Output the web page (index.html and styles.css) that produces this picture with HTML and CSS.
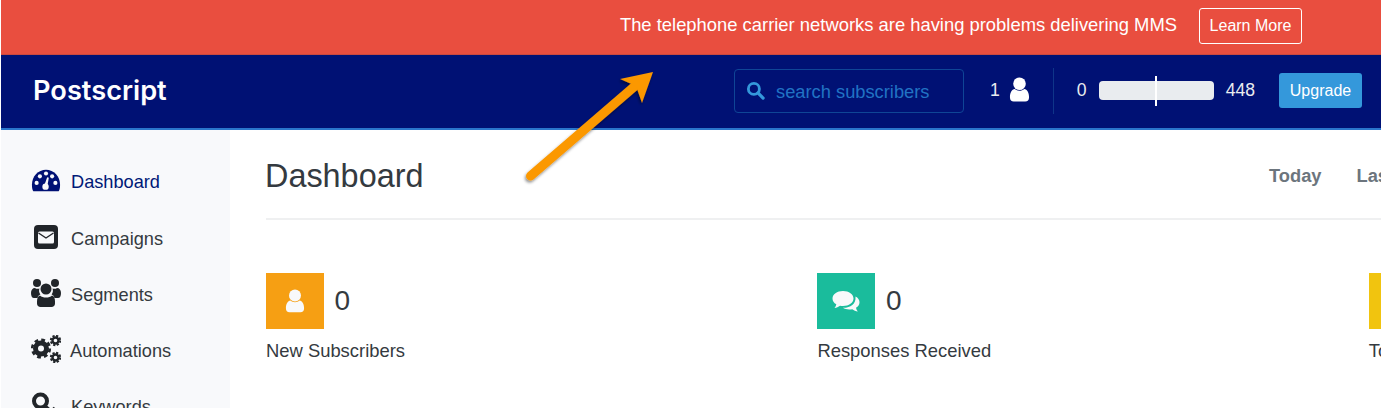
FILE: index.html
```html
<!DOCTYPE html>
<html lang="en">
<head>
<meta charset="utf-8">
<title>Postscript Dashboard</title>
<link rel="stylesheet" href="styles.css">
</head>
<body>
<div class="app">
  <div class="banner">
    <span class="banner-text">The telephone carrier networks are having problems delivering MMS</span>
    <a class="banner-btn">Learn More</a>
  </div>
  <header class="topbar">
    <div class="logo">Postscript</div>
    <div class="search">
      <svg class="search-icon" viewBox="0 0 20 20"><circle cx="8.3" cy="8.3" r="5.8" fill="none" stroke="currentColor" stroke-width="3"/><path d="M12.6 12.6 18 18" stroke="currentColor" stroke-width="3.4" stroke-linecap="round"/></svg>
      <span class="search-text">search subscribers</span>
    </div>
    <div class="count">
      <span>1</span>
      <svg class="count-icon" viewBox="0 0 22 26"><circle cx="11" cy="7" r="6.6" fill="currentColor"/><path d="M1 21c0-5 2-8 5-8.600 1.500 1.300 3 1.900 5 1.900s3.500-.6 5-1.900c3 .6 5 3.600 5 8.600 0 3-1.500 4.500-4 4.500H5c-2.500 0-4-1.500-4-4.500z" fill="currentColor"/></svg>
    </div>
    <div class="usage">
      <span>0</span>
      <div class="bar"><i class="tick"></i></div>
      <span>448</span>
    </div>
    <a class="upgrade">Upgrade</a>
  </header>
  <div class="body">
    <nav class="sidebar">
      <a class="nav-item active">
        <svg class="nav-icon level" viewBox="-1 0 32 26"><path fill="#001174" d="M1.500 24C.5 22.500 0 20.500 0 17 0 8 6.700 1 15 1s15 7 15 16c0 3.500-.5 5.500-1.500 7z"/><g fill="#f8f9fb"><circle cx="5" cy="15" r="2.200"/><circle cx="8.500" cy="8" r="2.200"/><circle cx="15" cy="5" r="2.200"/><circle cx="25" cy="15" r="2.200"/><circle cx="21.500" cy="8" r="2.200"/><circle cx="14.500" cy="19" r="3.400"/><path d="M13 18 16.300 9 18 9.500 16.300 19z"/></g></svg>
        <span>Dashboard</span>
      </a>
      <a class="nav-item">
        <svg class="nav-icon" viewBox="0 0 30 28"><rect x="3" y="2" width="24" height="24" rx="4" fill="#212529"/><rect x="7" y="8.500" width="16" height="12" rx="1.500" fill="#f8f9fb"/><path d="M7.500 10 15 15 22.500 10" fill="none" stroke="#212529" stroke-width="1.400"/></svg>
        <span>Campaigns</span>
      </a>
      <a class="nav-item">
        <svg class="nav-icon" viewBox="0 0 30 28"><g fill="#212529"><circle cx="6" cy="4" r="4"/><circle cx="24" cy="4" r="4"/><circle cx="15" cy="10" r="5.500"/><path d="M0 14c0-3 1.500-5 4-5 1 1 3 1 4.500.6-.8 1.800-.5 4.300.9 5.900-1.500.7-2.400 1.700-3 3.500H3c-2 0-3-2-3-5zM30 14c0-3-1.500-5-4-5-1 1-3 1-4.500.6.800 1.800.5 4.300-.9 5.900 1.500.7 2.400 1.700 3 3.500H27c2 0 3-2 3-5zM9 16.500c1.500 1.500 3.500 2 6 2s4.500-.5 6-2c2 .5 3 3 3 6v2c0 2-1.500 3.500-3.500 3.500h-11C7.500 28 6 26.500 6 24.500v-2c0-3 1-5.500 3-6z"/></g></svg>
        <span>Segments</span>
      </a>
      <a class="nav-item">
        <svg class="nav-icon" viewBox="0 0 30 28"><g fill="none" stroke="#212529"><circle cx="10" cy="13.500" r="5.500" stroke-width="5"/><circle cx="10" cy="13.500" r="8.800" stroke-width="2.600" stroke-dasharray="3.800 3.110"/><circle cx="24.500" cy="5.500" r="3" stroke-width="2.400"/><circle cx="24.500" cy="5.500" r="4.700" stroke-width="2" stroke-dasharray="2.200 1.490"/><circle cx="24.500" cy="22.500" r="3" stroke-width="2.400"/><circle cx="24.500" cy="22.500" r="4.700" stroke-width="2" stroke-dasharray="2.200 1.490"/></g></svg>
        <span class="tight">Automations</span>
      </a>
      <a class="nav-item">
        <svg class="nav-icon" viewBox="0 0 30 28"><circle cx="9.500" cy="10" r="6.500" fill="none" stroke="#212529" stroke-width="4"/><path d="M14 15 26 26M20 21l4-4" fill="none" stroke="#212529" stroke-width="3.600"/></svg>
        <span>Keywords</span>
      </a>
    </nav>
    <main class="main">
      <div class="page-head">
        <h1 class="title">Dashboard</h1>
        <div class="ranges"><span>Today</span><span>Last 7 Days</span></div>
      </div>
      <div class="stats">
        <section class="stat">
          <div class="stat-row">
            <div class="stat-icon orange"><svg class="stat-svg" viewBox="0 0 22 26"><circle cx="11" cy="7" r="6.600" fill="currentColor"/><path d="M1 21c0-5 2-8 5-8.600 1.500 1.300 3 1.900 5 1.900s3.500-.6 5-1.900c3 .6 5 3.600 5 8.600 0 3-1.500 4.500-4 4.500H5c-2.500 0-4-1.500-4-4.500z" fill="currentColor"/></svg></div>
            <span class="stat-num">0</span>
          </div>
          <div class="stat-label">New Subscribers</div>
        </section>
        <section class="stat">
          <div class="stat-row">
            <div class="stat-icon green"><svg class="stat-svg wide" viewBox="0 0 28 22"><path fill="currentColor" d="M11 1c6 0 10.500 3.300 10.500 7.500S17 16 11 16c-1 0-2-.1-3-.3-1.500 1.200-3.500 2-5.500 2.300 1-1.200 1.600-2.400 1.800-3.700C1.800 13 .5 10.900.5 8.500.5 4.300 5 1 11 1z"/><path fill="currentColor" d="M23.500 6.500c2.500 1.300 4 3.300 4 5.700 0 2.300-1.300 4.300-3.500 5.600.2 1.300.8 2.500 1.800 3.700-2-.3-4-1.100-5.500-2.300-1 .2-2 .3-3 .3-2.500 0-4.700-.6-6.500-1.700 7 .3 13.500-3.500 12.700-11.300z"/></svg></div>
            <span class="stat-num">0</span>
          </div>
          <div class="stat-label">Responses Received</div>
        </section>
        <section class="stat">
          <div class="stat-row">
            <div class="stat-icon yellow"></div>
            <span class="stat-num">0</span>
          </div>
          <div class="stat-label">Total Messages</div>
        </section>
      </div>
    </main>
  </div>
  <svg class="arrow" viewBox="0 0 140 125">
    <defs><filter id="sh" x="-20%" y="-20%" width="140%" height="140%"><feDropShadow dx="-1" dy="2" stdDeviation="1.500" flood-color="#000" flood-opacity=".45"/></filter></defs>
    <g filter="url(#sh)" fill="#fb9804">
      <path d="M10.500 111 115 21" stroke="#fb9804" stroke-width="9" stroke-linecap="round"/>
      <path d="M133 7 100 14 116 21 122 38z"/>
    </g>
  </svg>
</div>
</body>
</html>
```
FILE: styles.css
```css
* { box-sizing: border-box; }
html, body { margin: 0; height: 408px; overflow: hidden; background: #fff; }
body { font-family: "Liberation Sans", Arial, sans-serif; color: #212529; }
.app { position: relative; height: 408px; overflow: hidden; padding-left: 1px; }

.banner { height: 55px; background: #e94e3f; color: #fff; display: flex; align-items: center; justify-content: flex-end; padding: 0 79px 4px 0; gap: 22px; border-bottom: 1px solid #c9493f; }
.banner-text { font-size: 18.4px; white-space: nowrap; }
.banner-btn { width: 103px; height: 36px; margin-top: 1px; border: 1px solid #fff; border-radius: 3px; display: flex; align-items: center; justify-content: center; font-size: 16px; }

.topbar { height: 75px; background: #001174; border-bottom: 2px solid #2a76cc; display: flex; align-items: center; color: #e9ecef; font-size: 17.6px; padding: 0 19px 2px 32px; }
.logo { font-family: Inter, "Open Sans", sans-serif; font-weight: 600; font-size: 27.2px; color: #fff; margin-right: auto; }
.search { width: 230px; height: 44px; border: 1px solid #0f4596; border-radius: 4px; display: flex; align-items: center; gap: 11px; padding-left: 11px; color: #2173c4; font-size: 18.3px; }
.search-icon { width: 19px; height: 19px; color: #3498db; }
.search-text { padding-top: 2px; }
.count { display: flex; align-items: center; gap: 9px; margin-left: 26px; padding-right: 23px; height: 46px; border-right: 1px solid #0f3589; color: #e9ecef; }
.count-icon { width: 21px; height: 25px; color: #fff; margin-top: -3px; }
.usage { display: flex; align-items: center; gap: 12px; margin-left: 23px; }
.bar { position: relative; width: 115px; height: 19px; background: #e9ecef; border-radius: 4px; }
.tick { position: absolute; left: 56px; top: -5px; width: 2px; height: 30px; background: #fff; }
.upgrade { width: 83px; height: 35px; margin-left: 24px; background: #3498db; color: #fff; border-radius: 3px; font-size: 16px; display: flex; align-items: center; justify-content: center; }

.body { display: flex; height: 279px; overflow: hidden; }
.sidebar { width: 229px; flex: none; background: #f8f9fb; padding: 37px 0 0 30px; display: flex; flex-direction: column; gap: 26.2px; }
.nav-item { display: flex; flex: none; align-items: center; height: 30px; gap: 10px; font-size: 18.2px; color: #343a40; }
.nav-item.active { color: #001a77; margin-bottom: 1px; }
.nav-icon { width: 30px; height: 28px; flex: none; margin-top: -5px; }
.nav-icon.level { margin-top: -2px; }
.tight { margin-left: -1px; }

.main { flex: 1; min-width: 0; padding: 0 0 0 36px; overflow: hidden; }
.page-head { height: 90px; border-bottom: 2px solid #eff0f1; display: flex; align-items: center; justify-content: space-between; white-space: nowrap; }
.title { margin: 0 0 0 -1px; padding-top: 4px; font-size: 32.4px; font-weight: 400; color: #343a40; }
.ranges { display: flex; gap: 35px; width: 112px; font-size: 18.3px; font-weight: 700; color: #6c757d; margin-top: 3px; }

.stats { display: flex; margin-top: 53px; }
.stat { width: 551.4px; flex: none; }
.stat-row { display: flex; align-items: center; gap: 11px; }
.stat-icon { width: 57.5px; height: 56px; display: flex; align-items: center; justify-content: center; color: #f8f9fb; }
.orange { background: #f69f13; }
.green { background: #1abc9c; }
.yellow { background: #f1c40f; }
.stat-svg { width: 20px; height: 24px; }
.stat-svg.wide { width: 28px; height: 22px; }
.stat-num { font-size: 28px; color: #343a40; }
.stat-label { margin-top: 11px; font-size: 18.4px; color: #343a40; white-space: nowrap; }

.arrow { position: absolute; left: 520px; top: 65px; width: 140px; height: 125px; }
```
